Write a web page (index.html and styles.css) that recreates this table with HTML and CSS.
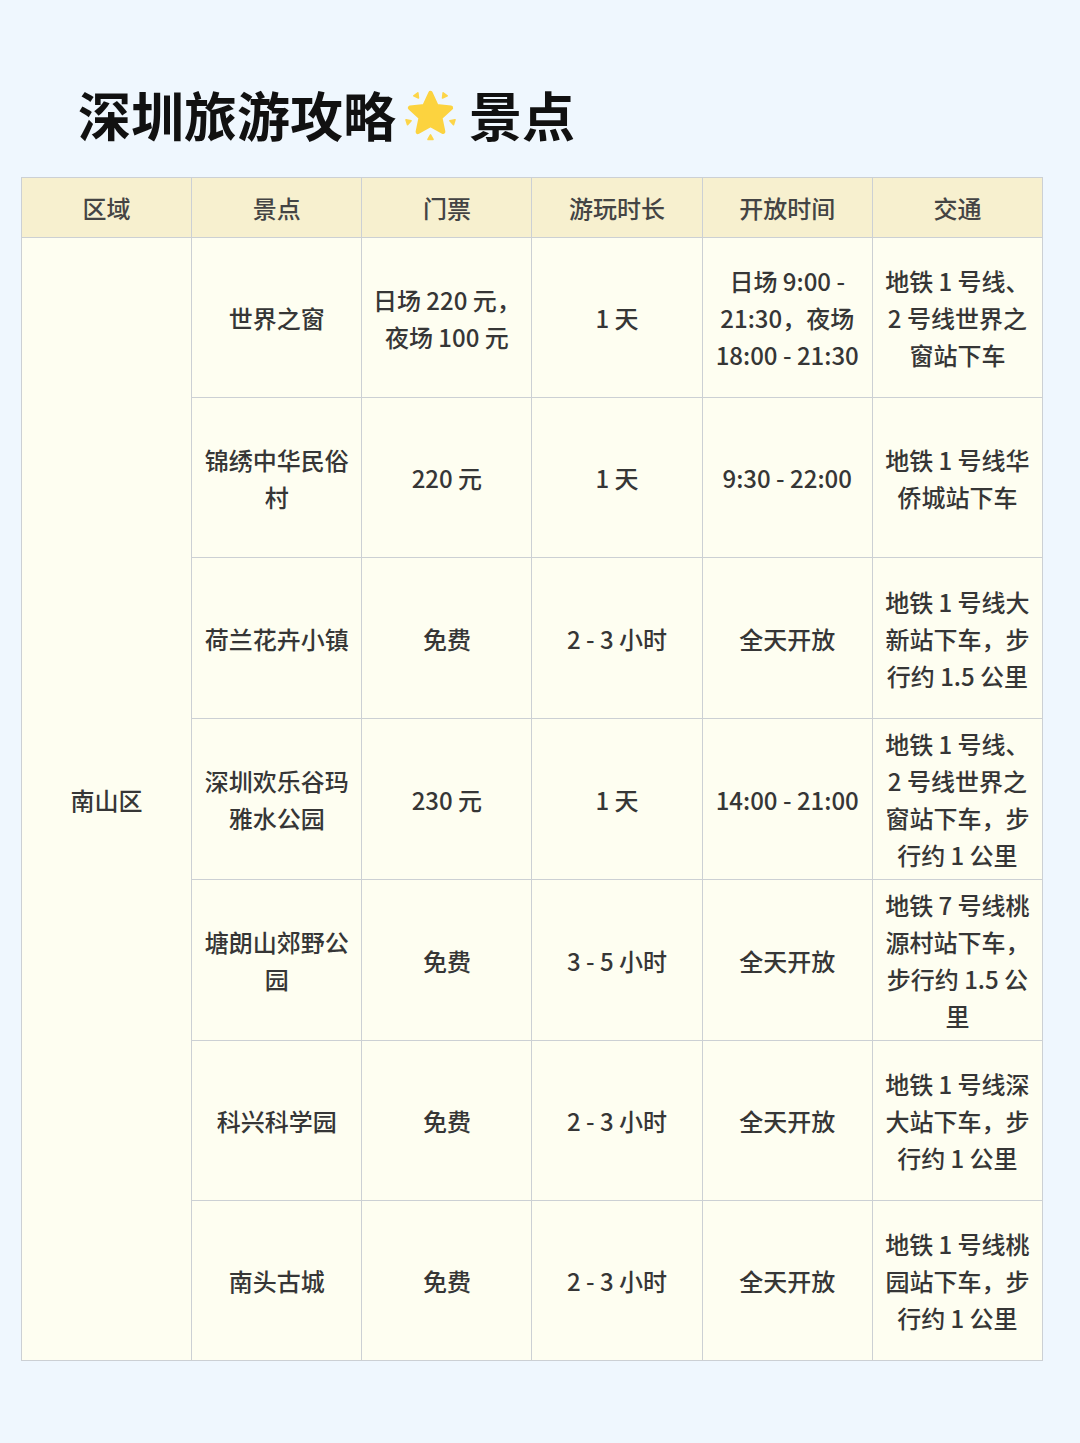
FILE: index.html
```html
<!DOCTYPE html>
<html lang="zh-CN">
<head>
<meta charset="utf-8">
<title>深圳旅游攻略 景点</title>
<link rel="stylesheet" href="styles.css">
</head>
<body>
<div class="page">
  <h1 class="title">
    <span>深圳旅游攻略</span>
    <svg class="sun" viewBox="0 0 52 52" aria-hidden="true">
      <path class="star" d="M26 5 L31.88 17.91 L45.97 19.51 L35.51 29.09 L38.35 42.99 L26 36 L13.65 42.99 L16.49 29.09 L6.03 19.51 L20.12 17.91 Z"/>
      <path class="ray" d="M37.76 9.82 L42.43 7.65 L38.39 4.71 Z"/>
      <path class="ray" d="M45.02 32.18 L48.53 35.95 L50.07 31.19 Z"/>
      <path class="ray" d="M26 46 L23.5 50.5 L28.5 50.5 Z"/>
      <path class="ray" d="M6.98 32.18 L1.93 31.19 L3.47 35.95 Z"/>
      <path class="ray" d="M14.24 9.82 L13.61 4.71 L9.57 7.65 Z"/>
    </svg>
    <span>景点</span>
  </h1>
  <table class="guide">
    <colgroup>
      <col class="c"><col class="c"><col class="c"><col class="c"><col class="c"><col class="c">
    </colgroup>
    <thead>
      <tr>
        <th>区域</th><th>景点</th><th>门票</th><th>游玩时长</th><th>开放时间</th><th>交通</th>
      </tr>
    </thead>
    <tbody>
      <tr>
        <td rowspan="7">南山区</td>
        <td>世界之窗</td>
        <td>日场 220 元，夜场 100 元</td>
        <td>1 天</td>
        <td>日场 9:00 - 21:30，夜场 18:00 - 21:30</td>
        <td>地铁 1 号线、2 号线世界之窗站下车</td>
      </tr>
      <tr>
        <td>锦绣中华民俗村</td>
        <td>220 元</td>
        <td>1 天</td>
        <td>9:30 - 22:00</td>
        <td>地铁 1 号线华侨城站下车</td>
      </tr>
      <tr class="tall">
        <td>荷兰花卉小镇</td>
        <td>免费</td>
        <td>2 - 3 小时</td>
        <td>全天开放</td>
        <td>地铁 1 号线大新站下车，步行约 1.5 公里</td>
      </tr>
      <tr class="tall">
        <td>深圳欢乐谷玛雅水公园</td>
        <td>230 元</td>
        <td>1 天</td>
        <td>14:00 - 21:00</td>
        <td>地铁 1 号线、2 号线世界之窗站下车，步行约 1 公里</td>
      </tr>
      <tr class="tall">
        <td>塘朗山郊野公园</td>
        <td>免费</td>
        <td>3 - 5 小时</td>
        <td>全天开放</td>
        <td>地铁 7 号线桃源村站下车，步行约 1.5 公里</td>
      </tr>
      <tr>
        <td>科兴科学园</td>
        <td>免费</td>
        <td>2 - 3 小时</td>
        <td>全天开放</td>
        <td>地铁 1 号线深大站下车，步行约 1 公里</td>
      </tr>
      <tr>
        <td>南头古城</td>
        <td>免费</td>
        <td>2 - 3 小时</td>
        <td>全天开放</td>
        <td>地铁 1 号线桃园站下车，步行约 1 公里</td>
      </tr>
    </tbody>
  </table>
</div>
</body>
</html>
```
FILE: styles.css
```css
html, body {
  margin: 0;
  padding: 0;
  background: #eff7fe;
}

body {
  font-family: "Noto Sans CJK SC", "Noto Sans", sans-serif;
  width: 1080px;
  height: 1443px;
  overflow: hidden;
}

.page {
  padding: 88px 0 0 21px;
}

.title {
  margin: 0 0 36px 57px;
  display: flex;
  align-items: center;
  gap: 8px;
  font-size: 53px;
  line-height: 53px;
  font-weight: 700;
  color: #111111;
  letter-spacing: 0;
}

.sun {
  width: 53px;
  height: 53px;
  margin-right: 4px;
}

.star {
  fill: #fcd33f;
  stroke: #fcd33f;
  stroke-width: 4.5;
  stroke-linejoin: round;
}

.ray {
  fill: #fdd548;
  stroke: #fdd548;
  stroke-width: 1.5;
  stroke-linejoin: round;
}

.guide {
  border-collapse: collapse;
  table-layout: fixed;
  width: 1022px;
}

.guide col.c {
  width: 170px;
}

.guide th,
.guide td {
  border: 1px solid #ccd0d4;
  text-align: center;
  vertical-align: middle;
  padding: 0 10px;
  font-size: 24px;
  line-height: 37px;
  font-weight: 500;
}

.guide th {
  height: 59px;
  background: #f7f0cf;
  color: #444444;
}

.guide td {
  height: 159px;
  background: #fefef1;
  color: #363636;
}

.guide tr.tall td {
  height: 160px;
}
```
